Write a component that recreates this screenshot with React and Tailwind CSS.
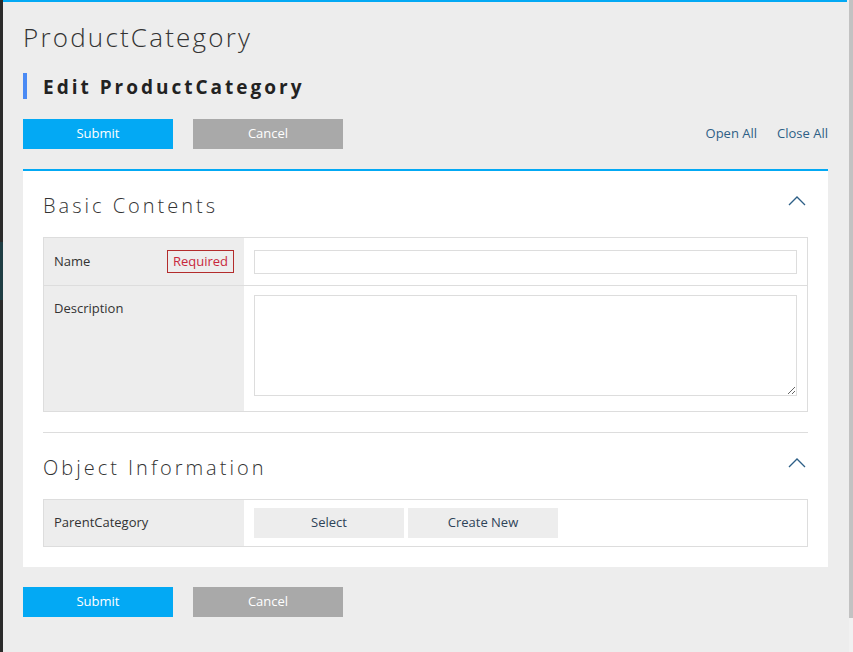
import React from 'react';

const font = { fontFamily: '"Open Sans", "Noto Sans", sans-serif' };

const Chevron = () => (
  <svg width="18" height="10" viewBox="0 0 18 10" className="text-[#2d5f86]">
    <polyline points="1,9 9,1 17,9" fill="none" stroke="currentColor" strokeWidth="1.3" />
  </svg>
);

const SectionHeader = ({ title }) => (
  <div className="flex items-center justify-between h-[30px] mb-[16px]">
    <h2 className="text-[20px] font-light tracking-[3px] text-[#333]">{title}</h2>
    <div className="pr-[2px] -mt-[10px]">
      <Chevron />
    </div>
  </div>
);

const ActionButtons = () => (
  <div className="flex gap-5">
    <button className="w-[150px] h-[30px] bg-[#03a9f4] text-white text-[13px]">Submit</button>
    <button className="w-[150px] h-[30px] bg-[#a9a9a9] text-white text-[13px]">Cancel</button>
  </div>
);

const App = () => {
  return (
    <div className="flex h-screen w-full overflow-hidden bg-[#ededed] text-[#333]" style={font}>
      {/* left edge of the host window */}
      <div className="w-[3px] flex flex-col">
        <div className="h-[242px] bg-[#2b2b2b]" />
        <div className="h-[58px] bg-[#1f3e44]" />
        <div className="flex-1 bg-[#2b2b2b]" />
      </div>

      <div className="flex-1 flex flex-col">
        <div className="h-[2px] bg-[#03a9f4] mr-[2px]" />
        <div className="pl-5 pr-[21px] pt-[18px]">
          <h1 className="text-[26px] font-light tracking-[2.2px] leading-[34px]">ProductCategory</h1>

          <div className="flex items-center mt-[19px] h-[26px]">
            <div className="w-[4px] h-[26px] bg-[#4a8af4]" />
            <h2 className="ml-4 text-[19px] font-bold tracking-[3px] text-[#222] leading-[26px] pt-[2px]">Edit ProductCategory</h2>
          </div>

          <div className="flex items-center justify-between mt-[20px]">
            <ActionButtons />
            <div className="flex gap-5 text-[13px] text-[#2d5f86]">
              <a>Open All</a>
              <a>Close All</a>
            </div>
          </div>

          <div className="mt-[20px] bg-white border-t-2 border-[#03a9f4] px-5 pt-[20px] pb-5">
            <SectionHeader title="Basic Contents" />
            <div className="border border-[#ddd] text-[13px]">
              <div className="flex border-b border-[#ddd]">
                <div className="w-[200px] bg-[#ededed] flex items-center justify-between px-[10px] h-[47px]">
                  <span>Name</span>
                  <span className="border border-[#b32c2c] text-[#c8283c] px-[5px] leading-[21px]">Required</span>
                </div>
                <div className="flex-1 px-[10px] flex items-center">
                  <input className="w-full h-[24px] border border-[#ddd] outline-none" />
                </div>
              </div>
              <div className="flex">
                <div className="w-[200px] bg-[#ededed] px-[10px] pt-[13px] h-[125px]">
                  <span>Description</span>
                </div>
                <div className="flex-1 px-[10px] pt-[9px]">
                  <textarea className="w-full h-[101px] border border-[#ddd] outline-none block" />
                </div>
              </div>
            </div>

            <div className="border-t border-[#ddd] mt-[20px] pt-[20px]">
              <SectionHeader title="Object Information" />
              <div className="border border-[#ddd] text-[13px] flex">
                <div className="w-[200px] bg-[#ededed] flex items-center px-[10px] h-[46px]">
                  <span>ParentCategory</span>
                </div>
                <div className="flex-1 px-[10px] flex items-center gap-1">
                  <button className="w-[150px] h-[30px] bg-[#ededed] text-[#2d4358]">Select</button>
                  <button className="w-[150px] h-[30px] bg-[#ededed] text-[#2d4358]">Create New</button>
                </div>
              </div>
            </div>
          </div>

          <div className="mt-[20px]">
            <ActionButtons />
          </div>
        </div>
      </div>

      {/* scrollbar */}
      <div className="w-[4px] flex flex-col">
        <div className="h-[618px] bg-[#c2c2c2]" />
        <div className="flex-1 bg-[#f1f1f1]" />
      </div>
    </div>
  );
};

export default App;
